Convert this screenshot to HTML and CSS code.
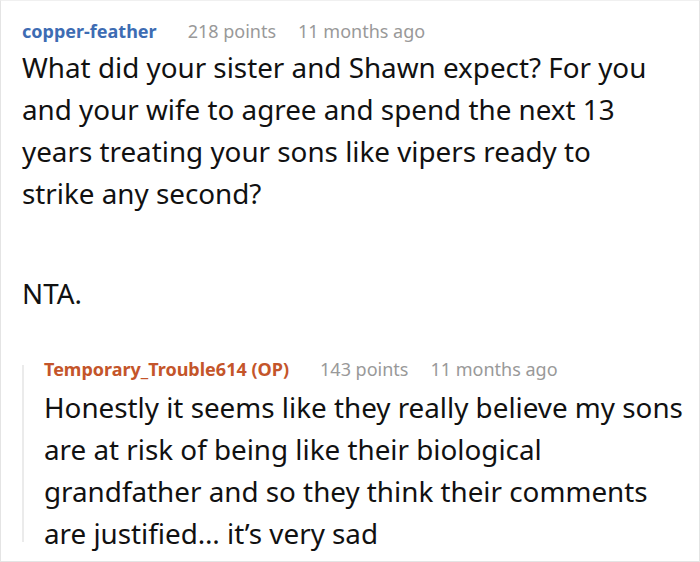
FILE: index.html
```html
<!DOCTYPE html>
<html lang="en">
  <head>
    <meta charset="UTF-8" />
    <title>Comment thread</title>
    <link rel="stylesheet" href="styles.css">
  </head>

  <body>
    <div class="thread">
      <div class="comment">
        <div class="meta">
          <span class="author">copper-feather</span>
          <span class="points">218 points</span>
          <span class="time">11 months ago</span>
        </div>
        <div class="body main-body">
          <p>What did your sister and Shawn expect? For you and your wife to agree and spend the next 13 years treating your sons like vipers ready to strike any second?</p>
          <p>NTA.</p>
        </div>

        <div class="comment reply">
          <div class="meta">
            <span class="author op">Temporary_Trouble614 (OP)</span>
            <span class="points">143 points</span>
            <span class="time">11 months ago</span>
          </div>
          <div class="body reply-body">
            <p>Honestly it seems like they really believe my sons are at risk of being like their biological grandfather and so they think their comments are justified… it’s very sad</p>
          </div>
        </div>
      </div>
    </div>
  </body>
</html>
```

FILE: styles.css
```css
body {
  margin: 0;
  font-family: "Noto Sans", "Open Sans", sans-serif;
  color: #111;
  background: #fff;
}

.thread {
  /* 整个截图外面一圈浅灰边框 */
  box-sizing: border-box;
  width: 700px;
  height: 562px;
  border: 1px solid #e4e4e4;
  border-top-color: #f0f0f0;
  overflow: hidden;
}

.comment {
  padding: 18px 0 0 21px;
}

.meta {
  font-size: 18px;
  line-height: 24px;
  display: flex;
}

.author {
  font-weight: bold;
  color: #3d6cb3;
  margin-right: 31px;
}

.author.op {
  color: #c4552a;
}

.points,
.time {
  color: #999;
}

.points {
  margin-right: 22px;
}

.body {
  margin-top: 5px;
  font-size: 27.8px;
  line-height: 42px;
}

.main-body {
  margin-top: 3px;
  padding-right: 40px;
}

.reply-body {
  padding-right: 8px;
}

.body p {
  margin: 0;
}

.body p + p {
  margin-top: 58px;
}

.reply {
  position: relative;
  margin-top: 43px;
  padding: 0 0 0 22px;
}

/* 回复左边的竖线，比内容短一点 */
.reply::before {
  content: "";
  position: absolute;
  left: 0;
  top: 8px;
  bottom: 12px;
  width: 2px;
  background: #ebebeb;
}
```
